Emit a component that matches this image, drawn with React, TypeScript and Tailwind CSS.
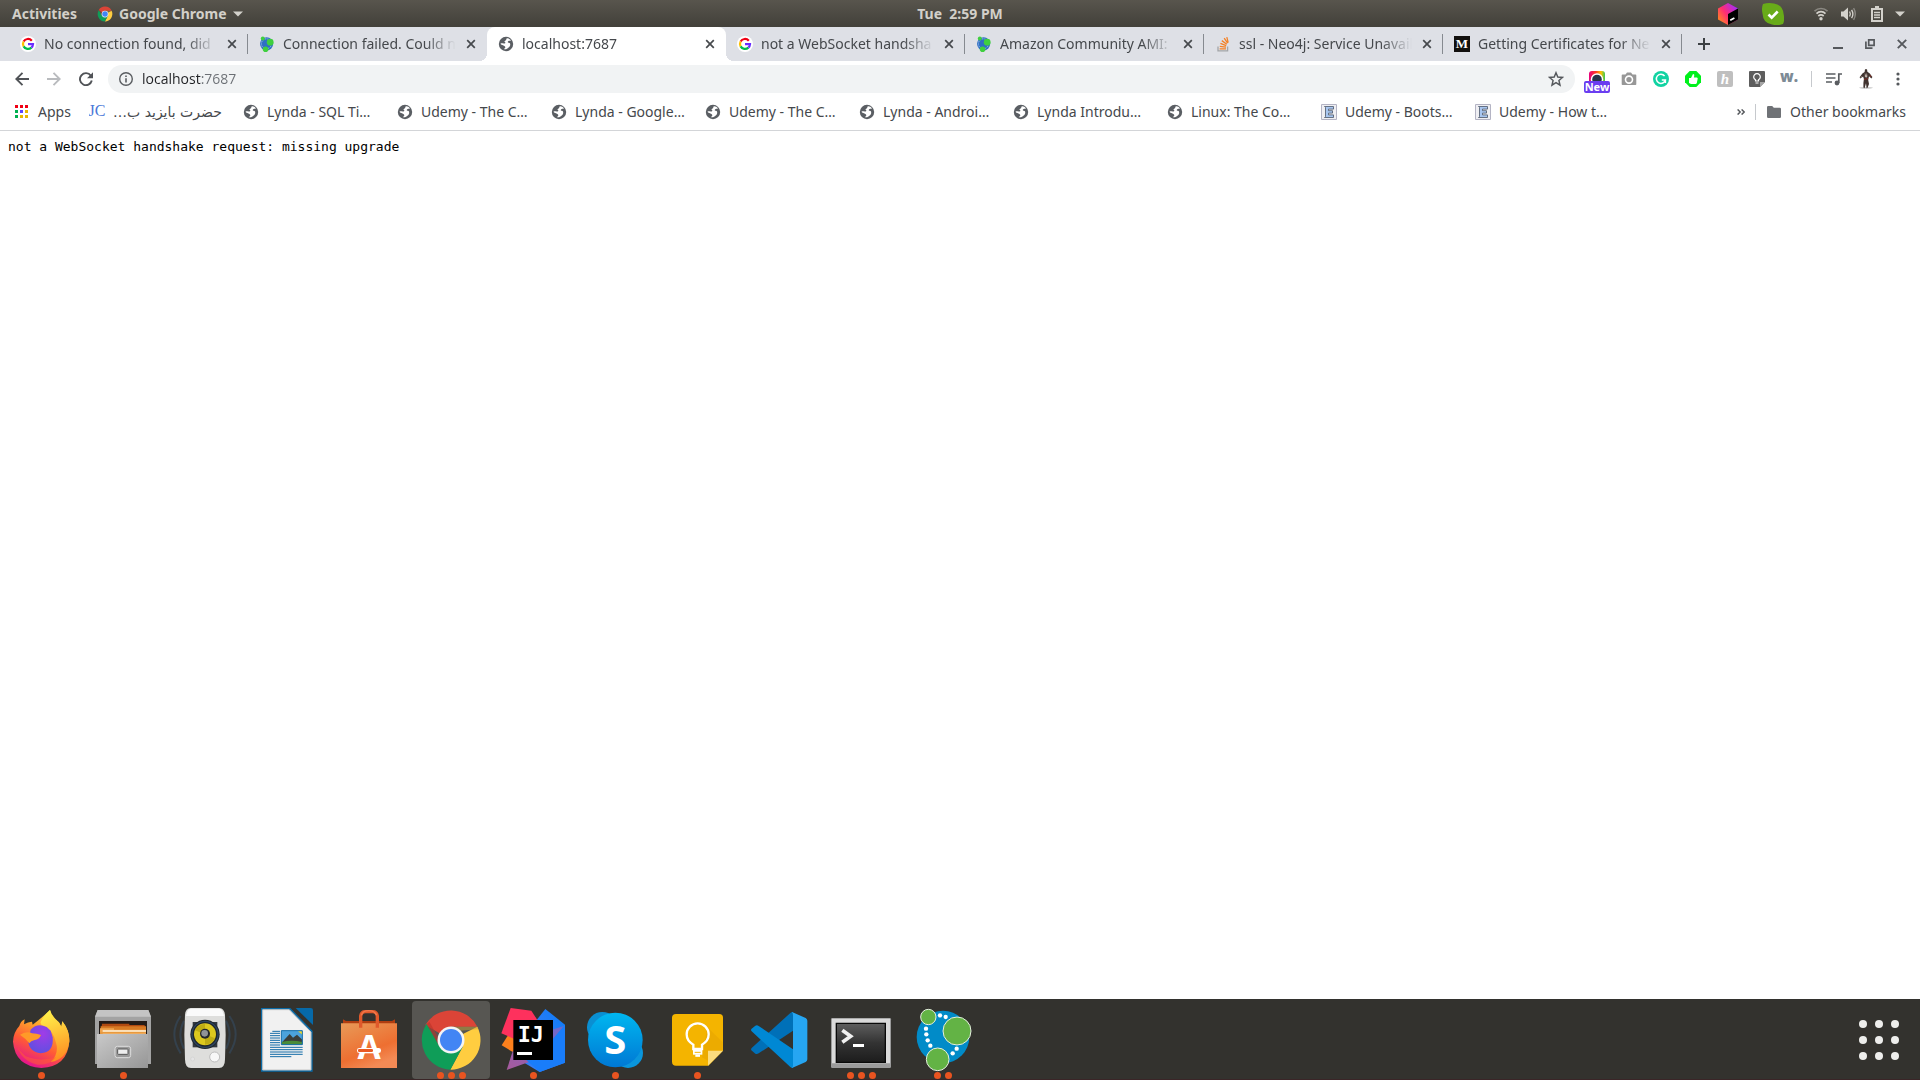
import type { ReactNode } from "react";


function GoogleIcon() {
    return (
        <svg viewBox="0 0 16 16" className="size-4 shrink-0">
            <circle cx="8" cy="8" r="8" fill="#fff" />
            <g fill="none" strokeWidth="2.2">
                <path d="M3.6 5.6A5 5 0 0 1 11.8 4.7" stroke="#f00014" />
                <path d="M3.6 10.4A5 5 0 0 1 3.6 5.6" stroke="#ffc000" />
                <path d="M11.4 11.6A5 5 0 0 1 3.6 10.4" stroke="#00bd4c" />
                <path d="M8 8.2h5A5 5 0 0 1 11.4 11.6" stroke="#6a2cff" />
            </g>
        </svg>
    );
}

function Neo4jIcon() {
    return (
        <svg viewBox="0 0 16 16" className="size-4 shrink-0">
            <circle cx="7.6" cy="7.8" r="6.6" fill="#2f6fc4" />
            <circle cx="7.4" cy="7.8" r="5" fill="none" stroke="#a9c6ea" strokeWidth=".9" strokeDasharray="1.4 1" />
            <circle cx="3.8" cy="2.6" r="2" fill="#3fcf3f" />
            <circle cx="11.2" cy="6.2" r="3.4" fill="#3fcf3f" />
            <circle cx="6.6" cy="13.2" r="2.8" fill="#3fcf3f" />
        </svg>
    );
}

function GlobeIcon() {
    return (
        <svg viewBox="0 0 16 16" className="size-4 shrink-0">
            <circle cx="8" cy="8" r="7.2" fill="#5a5e63" />
            <path d="M8.6 2.4 C10 2.1 12 2.9 13 4.6 C11.8 5 10.8 4.6 10 5.4 C9.4 6 10 6.8 10.8 6.8 C12.2 6.9 12.4 8.2 12.1 9.4 C11.6 11.2 10 12 9 12.8 C7.6 13.6 6.2 13.4 5.8 12.9 C7.2 12.4 7.6 11.4 7 10.4 C6.4 9.4 4.8 9.2 3 8.4 L2.6 7.4 C3.8 7.2 5.6 7.6 6.6 7.4 C7.8 7.2 7.4 5.8 6.2 5.6 C6.8 4.6 8.6 4.2 8.6 2.4Z" fill="#fff" />
        </svg>
    );
}

function StackIcon() {
    return (
        <svg viewBox="0 0 16 16" className="size-4 shrink-0" fill="none">
            <path d="M3 10.5v4.4h9.6v-4.4" stroke="#a3a5a8" strokeWidth="1.3" />
            <path d="M4.6 12.8h6.4M4.8 10.3l6.2.8M5.4 7.4l5.8 2.2M6.8 4.6l5 3.6M9.2 2.2l3.4 5M11.8 1.2l1.4 5.4" stroke="#f48024" strokeWidth="1.3" />
        </svg>
    );
}

function MediumIcon() {
    return (
        <svg viewBox="0 0 16 16" className="size-4 shrink-0">
            <path d="M0 0h16v16H0z" fill="#12100e" />
            <text x="8" y="12.4" textAnchor="middle" fontFamily="Liberation Serif, serif" fontWeight="700" fontSize="13" fill="#fff">M</text>
        </svg>
    );
}

function JcIcon() {
    return (
        <svg viewBox="0 0 16 16" className="size-4 shrink-0 overflow-visible">
            <text x="8" y="11.6" textAnchor="middle" fontFamily="Liberation Serif, serif" fontSize="16" fill="#4a78d8">JC</text>
        </svg>
    );
}

function EclipseIcon() {
    return (
        <svg viewBox="0 0 16 16" className="size-4 shrink-0">
            <path d="M.5.5h15v15H.5z" fill="#efeff3" stroke="#b4b4c4" />
            <path d="M3.5 2.5h9v2.6h-5v1.6h4v2.4h-4v1.8h5v2.6h-9l1-1V3.500z" fill="#a8c6f0" stroke="#4a5668" strokeWidth=".8" />
        </svg>
    );
}

function ChromeIcon({ className }: { className: string }) {
    return (
        <svg viewBox="537 54 192 192" className={className}>
            <path d="M633 150L556 105A89 89 0 0 1 712 110H633z" fill="#db4437" />
            <path d="M633 150L712 110A89 89 0 0 1 631 239L668 170z" fill="#ffcd40" />
            <path d="M633 150L668 170L631 239A89 89 0 0 1 560 101L598 168z" fill="#0f9d58" />
            <path d="M633 110h79l3 8l-55 4z" fill="#c5a23a" opacity=".5" />
            <path d="M560 103l8-8l34 60l-5 12z" fill="#b93428" opacity=".6" />
            <circle cx="633" cy="150" r="40.5" fill="#f4f4f4" />
            <circle cx="633" cy="150" r="33" fill="#4285f4" />
        </svg>
    );
}

function CloseIcon() {
    return (
        <svg viewBox="0 0 10 10" className="size-[10px]" stroke="#46494d" strokeWidth="1.7">
            <path d="M1.2 1.2l7.6 7.6M8.8 1.2L1.2 8.8" />
        </svg>
    );
}

function Caret() {
    return (
        <svg viewBox="0 0 10 6" className="h-[6px] w-[10px]" fill="#d3d1cb">
            <path d="M0 .5h10L5 5.5z" />
        </svg>
    );
}


function TopBar() {
    return (
        <header className="grid h-[27px] grid-cols-3 items-center bg-gradient-to-b from-[#58554d] to-[#42403a] px-3 text-sm font-bold text-[#d3d0c9]">
            <div className="flex items-center">
                <button>Activities</button>
                <button className="ml-5 flex items-center gap-[6px]">
                    <ChromeIcon className="size-4" />
                    Google Chrome
                    <Caret />
                </button>
            </div>
            <button className="justify-self-center whitespace-pre">Tue  2:59 PM</button>
            <div className="flex items-center justify-self-end pr-[3px]">
                <svg viewBox="0 0 20 22" className="mr-6 h-[22px] w-5">
                    <defs>
                        <linearGradient id="toolbox" x1="0" y1=".8" x2=".9" y2=".1">
                            <stop offset="0" stopColor="#ff8a1e" />
                            <stop offset=".45" stopColor="#ff2d74" />
                            <stop offset="1" stopColor="#a02cff" />
                        </linearGradient>
                    </defs>
                    <path d="M10 0L20 5.5v11L10 22L0 16.500V5.500z" fill="url(#toolbox)" />
                    <path d="M10 11l10-5.500v11L10 22z" fill="#000" />
                    <path d="M12.200 17.200l4.200-2.300" stroke="#fff" strokeWidth="1.700" />
                </svg>
                <svg viewBox="0 0 22 22" className="mr-[30px] size-[22px]">
                    <path d="M1 1Q6-.6 12 .4Q21 2 21.600 11Q23 17 21 21Q16 23 10 21.600Q1 20 .6 11Q-.8 5 1 1z" fill="#68ab19" />
                    <path d="M6.500 11.500l3.200 3.200l6-6.200" fill="none" stroke="#fff" strokeWidth="2.600" />
                </svg>
                <svg viewBox="0 0 14 14" className="mr-[13px] size-[14px]" fill="none" stroke="#d3d1cb" strokeWidth="1.700">
                    <path d="M.5 4.200A9.200 9.200 0 0 1 13.500 4.200" opacity=".45" />
                    <path d="M2.500 6.600A6.300 6.300 0 0 1 11.500 6.600M4.300 9A4 4 0 0 1 9.700 9" />
                    <circle cx="7" cy="11.800" r="1.700" fill="#d3d1cb" stroke="none" />
                </svg>
                <svg viewBox="0 0 15 14" className="mr-[15px] h-[14px] w-[15px]" fill="none" stroke="#d3d1cb" strokeWidth="1.400">
                    <path d="M0 4.500h2.500L7 .5v13L2.500 9.500H0z" fill="#d3d1cb" stroke="none" />
                    <path d="M8.600 4.500q1.500 2.500 0 5M10.600 2.800q2.600 4.200 0 8.400" />
                    <path d="M12.600 1.200q3.400 5.800 0 11.600" opacity=".45" />
                </svg>
                <svg viewBox="0 0 12 16" className="mr-3 h-4 w-3" fill="none" stroke="#d3d1cb">
                    <path d="M1 3h10v12H1z" strokeWidth="2" />
                    <path d="M4 0h4v2H4z" fill="#d3d1cb" stroke="none" />
                    <path d="M3 6.500h6M3 9h6M3 11.500h6" strokeWidth="1.500" />
                </svg>
                <Caret />
            </div>
        </header>
    );
}


const tabs = [
    { title: "No connection found, did", icon: <GoogleIcon />, divider: true },
    { title: "Connection failed. Could n", icon: <Neo4jIcon /> },
    { title: "localhost:7687", icon: <GlobeIcon />, active: true },
    { title: "not a WebSocket handsha", icon: <GoogleIcon />, divider: true },
    { title: "Amazon Community AMI:", icon: <Neo4jIcon />, divider: true },
    { title: "ssl - Neo4j: Service Unavail", icon: <StackIcon />, divider: true },
    { title: "Getting Certificates for Ne", icon: <MediumIcon />, divider: true },
];

function TabStrip() {
    return (
        <nav className="flex h-[34px] items-center bg-[#dee0e6] pr-[13px] pl-[9px]">
            {tabs.map((tab) => (
                <div
                    key={tab.title}
                    className={
                        tab.active
                            ? "relative flex h-full w-[239px] min-w-0 items-center rounded-t-lg bg-white pr-[11px] pl-[11px] before:absolute before:bottom-0 before:-left-2 before:size-2 before:bg-[radial-gradient(circle_at_0_0,transparent_8px,white_8px)] after:absolute after:-right-2 after:bottom-0 after:size-2 after:bg-[radial-gradient(circle_at_100%_0,transparent_8px,white_8px)]"
                            : "relative flex h-full w-[239px] min-w-0 items-center pr-[11px] pl-[11px]"
                    }
                >
                    {tab.icon}
                    <a href="#" className="ml-2 min-w-0 flex-1 overflow-hidden whitespace-nowrap text-[#45484c] [mask-image:linear-gradient(to_right,black_82%,transparent)]">
                        {tab.title}
                    </a>
                    <button aria-label="Close tab" className="ml-[10px]">
                        <CloseIcon />
                    </button>
                    {tab.divider && <span className="absolute right-0 h-5 w-px bg-[#868a90]" />}
                </div>
            ))}
            <button aria-label="New tab" className="ml-4">
                <svg viewBox="0 0 12 12" className="size-3" stroke="#3c4043" strokeWidth="2">
                    <path d="M6 0v12M0 6h12" />
                </svg>
            </button>
            <div className="ml-auto flex items-center gap-[22px]">
                <button aria-label="Minimize">
                    <svg viewBox="0 0 10 10" className="size-[10px]" fill="#55585c"><path d="M0 8h10v2H0z" /></svg>
                </button>
                <button aria-label="Restore">
                    <svg viewBox="0 0 10 10" className="size-[10px]" fill="none" stroke="#55585c" strokeWidth="1.700">
                        <path d="M3.700.9h5.400v5.400H3.700zM.9 2.500v6.600h6.600" />
                    </svg>
                </button>
                <button aria-label="Close window">
                    <svg viewBox="0 0 10 10" className="size-[10px]" stroke="#55585c" strokeWidth="1.900"><path d="M.8.8l8.400 8.400M9.200.8L.8 9.200" /></svg>
                </button>
            </div>
        </nav>
    );
}


function ExtensionButton({ label, children }: { label: string; children: ReactNode }) {
    return (
        <button aria-label={label} className="relative flex size-8 items-center justify-center">
            {children}
        </button>
    );
}

function Toolbar() {
    return (
        <div className="flex h-9 items-center bg-white pr-[6px]">
            <div className="flex items-center gap-[18px] pl-[15px]">
                <button aria-label="Back">
                    <svg viewBox="0 0 14 14" className="size-[14px]" fill="none" stroke="#505357" strokeWidth="1.900"><path d="M14 7H1.500M7.500.8L1.300 7l6.200 6.200" /></svg>
                </button>
                <button aria-label="Forward">
                    <svg viewBox="0 0 14 14" className="size-[14px]" fill="none" stroke="#b9bbbe" strokeWidth="1.900"><path d="M0 7h12.500M6.500.8L12.700 7l-6.200 6.200" /></svg>
                </button>
                <button aria-label="Reload">
                    <svg viewBox="0 0 14 14" className="size-[14px]" fill="none" stroke="#505357" strokeWidth="1.900">
                        <path d="M11.800 3.600A6 6 0 1 0 12.800 8.600" />
                        <path d="M14 .2v6H8z" fill="#505357" stroke="none" />
                    </svg>
                </button>
            </div>
            <div className="ml-[15px] flex h-7 flex-1 items-center rounded-full bg-[#f1f3f4] px-[11px]">
                <svg viewBox="0 0 14 14" className="size-[14px] shrink-0" fill="none" stroke="#5a5d61" strokeWidth="1.400">
                    <circle cx="7" cy="7" r="6.300" />
                    <path d="M7 6.200v4.300M7 3.400v1.700" strokeWidth="1.600" />
                </svg>
                <input
                    aria-label="Address"
                    defaultValue="localhost:7687"
                    className="ml-[9px] min-w-0 flex-1 bg-[linear-gradient(to_right,#202124_59px,#6b6f74_59px)] bg-clip-text font-['Open_Sans',sans-serif] text-transparent outline-none"
                />
                <button aria-label="Bookmark this page">
                    <svg viewBox="0 0 24 24" className="size-[16px]" fill="none" stroke="#55585c" strokeWidth="2.200">
                        <path d="M12 2.600l2.700 6.500 7 .6-5.300 4.600 1.600 6.900-6-3.700-6 3.700 1.600-6.900-5.300-4.600 7-.6z" />
                    </svg>
                </button>
            </div>
            <div className="ml-[6px] flex items-center">
                <ExtensionButton label="Screen capture">
                    <svg viewBox="0 0 16 16" className="size-4">
                        <defs>
                            <linearGradient id="capture">
                                <stop offset="0" stopColor="#e6007e" />
                                <stop offset=".45" stopColor="#ff3b1f" />
                                <stop offset=".75" stopColor="#ffc400" />
                                <stop offset="1" stopColor="#35c759" />
                            </linearGradient>
                        </defs>
                        <rect width="16" height="16" rx="3" fill="url(#capture)" />
                        <circle cx="8" cy="8.500" r="6.200" fill="#fff" />
                        <circle cx="8" cy="8.500" r="4.800" fill="#26344a" />
                    </svg>
                    <span className="absolute inset-x-[3px] bottom-[2px] rounded-[2px] bg-[#6a3df0] text-center text-[11px] leading-3 font-bold text-white">New</span>
                </ExtensionButton>
                <ExtensionButton label="Screenshot">
                    <svg viewBox="0 0 16 16" className="size-4" fill="#979797">
                        <path d="M1.500 3.500H4.500L6 1.500h4l1.500 2h3q.8 0 .8.800v9q0 .8-.8.800h-13q-.8 0-.8-.8v-9q0-.8.800-.8z" />
                        <circle cx="8" cy="8.600" r="3.500" fill="none" stroke="#fff" strokeWidth="1.600" />
                    </svg>
                </ExtensionButton>
                <ExtensionButton label="Grammar">
                    <svg viewBox="0 0 16 16" className="size-4">
                        <circle cx="8" cy="8" r="8" fill="#11d3a2" />
                        <path d="M11.600 5A4.600 4.600 0 1 0 12.400 9H8.800M12.400 9v3" fill="none" stroke="#fff" strokeWidth="1.500" />
                    </svg>
                </ExtensionButton>
                <ExtensionButton label="Like">
                    <svg viewBox="0 0 16 16" className="size-4">
                        <path d="M4.700 0h6.600L16 4.700v6.600L11.300 16H4.700L0 11.300V4.700z" fill="#00f01c" />
                        <path d="M4 7h2l2-4q1.800 0 1.200 2L8.900 6.400h3q1 .3.800 1.400L11.800 12q-.4.900-1.200.9H6L4 12z" fill="#fff" />
                    </svg>
                </ExtensionButton>
                <ExtensionButton label="Coupons">
                    <svg viewBox="0 0 16 16" className="size-4">
                        <rect width="16" height="16" rx="2" fill="#bfbfbf" />
                        <text x="8" y="13" textAnchor="middle" fontFamily="Liberation Serif, serif" fontStyle="italic" fontWeight="700" fontSize="15" fill="#fff">h</text>
                    </svg>
                </ExtensionButton>
                <ExtensionButton label="Notes">
                    <svg viewBox="0 0 16 16" className="size-4" fill="none" stroke="#fff" strokeWidth="1.200">
                        <path d="M1 0h14q1 0 1 1v10l-5 5H1q-1 0-1-1V1q0-1 1-1z" fill="#5d5d5d" stroke="none" />
                        <path d="M16 11h-5v5z" fill="#a5a5a5" stroke="none" />
                        <path d="M6.500 10V8.800A3.300 3.300 0 1 1 9.500 8.800V10zM6.500 12h3" />
                    </svg>
                </ExtensionButton>
                <ExtensionButton label="Wiki">
                    <svg viewBox="0 0 16 16" className="size-4 overflow-visible">
                        <text x="8" y="11" textAnchor="middle" fontFamily="Open Sans, sans-serif" fontWeight="800" fontSize="15" fill="#7d8b96">w.</text>
                    </svg>
                </ExtensionButton>
            </div>
            <span className="ml-[6px] h-4 w-px bg-[#c6c9cd]" />
            <div className="ml-[6px] flex items-center">
                <ExtensionButton label="Media controls">
                    <svg viewBox="0 0 16 14" className="h-[14px] w-4" fill="none" stroke="#5a5d61" strokeWidth="1.700">
                        <path d="M0 2h9.500M0 6h9.500M0 10h6M12.800 11V2H16" />
                        <circle cx="11" cy="11" r="2.400" fill="#5a5d61" stroke="none" />
                    </svg>
                </ExtensionButton>
                <ExtensionButton label="Profile">
                    <svg viewBox="0 0 20 20" className="size-5">
                        <ellipse cx="10" cy="18.800" rx="7" ry=".9" fill="#c9c9c9" />
                        <path d="M9 .2l2 0 .4 2.600 2.400 1.600 2.600 3.600-1 1.600-2.400-2.400L12.200 11l.8 4-1.400 3.800-1 .4-.6-5-1.400 5-1.200-.6L7.400 14l.5-4-.8-2.400L4.400 9.600l-.8-1.400L6.400 4.600 8.600 3z" fill="#40332f" />
                        <path d="M8.900 3.800l1.200 3 .8-3 .5 3.600-1.300 1.400-1.300-1.200zM4.200 8.200l1.400-1 .4 1z" fill="#c4b6ae" />
                        <path d="M8 10.500l4-1M14 6l1 2" stroke="#8e2b23" strokeWidth=".8" />
                    </svg>
                </ExtensionButton>
                <ExtensionButton label="Menu">
                    <svg viewBox="0 0 4 14" className="h-[14px] w-1" fill="#55585c">
                        <circle cx="2" cy="2" r="1.600" />
                        <circle cx="2" cy="7" r="1.600" />
                        <circle cx="2" cy="12" r="1.600" />
                    </svg>
                </ExtensionButton>
            </div>
        </div>
    );
}


const bookmarks = [
    { title: "حضرت بایزید ب…", icon: <JcIcon />, rtl: true },
    { title: "Lynda - SQL Ti…", icon: <GlobeIcon /> },
    { title: "Udemy - The C…", icon: <GlobeIcon /> },
    { title: "Lynda - Google…", icon: <GlobeIcon /> },
    { title: "Udemy - The C…", icon: <GlobeIcon /> },
    { title: "Lynda - Androi…", icon: <GlobeIcon /> },
    { title: "Lynda Introdu…", icon: <GlobeIcon /> },
    { title: "Linux: The Co…", icon: <GlobeIcon /> },
    { title: "Udemy - Boots…", icon: <EclipseIcon /> },
    { title: "Udemy - How t…", icon: <EclipseIcon /> },
];

const appColors = ["#f00014", "#f00014", "#f00014", "#00b050", "#5b45ff", "#e8b800", "#00b050", "#e8b800", "#e8b800"];

function BookmarksBar() {
    return (
        <div className="flex h-[34px] items-center border-b border-[#d3d5d8] bg-white pr-[14px] pb-1 pl-[15px] whitespace-nowrap text-[#45484c]">
            <a href="#" className="flex w-[74px] shrink-0 items-center gap-[10px]">
                <span className="grid grid-cols-3 gap-[2px]">
                    {appColors.map((color, i) => (
                        <span key={i} className="size-[3px]" style={{ backgroundColor: color }} />
                    ))}
                </span>
                Apps
            </a>
            {bookmarks.map((item, i) => (
                <a key={i} href="#" className="flex w-[154px] min-w-0 items-center gap-2 overflow-hidden">
                    {item.icon}
                    <span dir={item.rtl ? "rtl" : "ltr"} className={item.rtl ? "font-['DejaVu_Sans',sans-serif]" : ""}>{item.title}</span>
                </a>
            ))}
            <div className="ml-auto flex items-center">
                <button aria-label="More bookmarks">
                    <svg viewBox="0 0 8 6" className="h-[6px] w-2" fill="none" stroke="#55585c" strokeWidth="1.400"><path d="M.6.4L3.200 3L.6 5.600M4.600.4L7.200 3L4.600 5.600" /></svg>
                </button>
                <span className="ml-[10px] h-4 w-px bg-[#c6c9cd]" />
                <a href="#" className="ml-[11px] flex items-center gap-[9px]">
                    <svg viewBox="0 0 14 12" className="h-3 w-[14px]" fill="#6f7276"><path d="M1.200 0h4l1.600 1.700h6Q14 1.700 14 2.900v8Q14 12 12.800 12H1.200Q0 12 0 10.800V1.200Q0 0 1.200 0z" /></svg>
                    Other bookmarks
                </a>
            </div>
        </div>
    );
}


function FirefoxDockIcon() {
    return (
        <svg viewBox="27 54 192 192" className="size-16">
            <defs>
                <linearGradient id="fox" x1=".8" y1="0" x2=".35" y2="1">
                    <stop offset="0" stopColor="#fff44f" />
                    <stop offset=".35" stopColor="#ffa42a" />
                    <stop offset=".65" stopColor="#ff5a36" />
                    <stop offset="1" stopColor="#e3128f" />
                </linearGradient>
                <linearGradient id="foxTail" x1=".4" y1="0" x2=".6" y2="1">
                    <stop offset="0" stopColor="#fff14a" />
                    <stop offset="1" stopColor="#ff8a20" />
                </linearGradient>
                <radialGradient id="foxGlobe" cx=".6" cy=".3" r=".8">
                    <stop offset="0" stopColor="#a03ce8" />
                    <stop offset="1" stopColor="#5a51e0" />
                </radialGradient>
            </defs>
            <path d="M74 88L72 103Q84 96 96 95L98 104Q125 84 150 60Q155 78 176 96L184 110L187 94Q208 120 208 153Q203 230 124 234Q45 228 39 155Q40 127 58 108Q61 95 74 88z" fill="url(#fox)" />
            <path d="M150 60Q152 80 178 98L184 110L187 94Q210 124 208 155Q200 208 152 216Q178 190 168 158Q160 122 134 110Q120 104 122 96Q130 78 150 60z" fill="url(#foxTail)" />
            <path d="M92 119Q112 98 140 111L152 122L158 142Q162 188 122 190Q84 184 85 150z" fill="url(#foxGlobe)" />
            <path d="M60 134Q82 122 96 130Q110 130 123 135Q118 148 104 150Q92 152 88 160Q78 146 60 134z" fill="#ff9a28" />
            <path d="M44 130Q40 170 76 198Q118 216 168 202Q150 226 112 224Q50 212 44 130z" fill="#ff5b36" opacity=".55" />
        </svg>
    );
}

function FilesDockIcon() {
    return (
        <svg viewBox="273 54 192 192" className="size-16">
            <defs>
                <linearGradient id="cabinet" x1="0" y1="0" x2="1" y2="1">
                    <stop offset="0" stopColor="#c9c9c9" />
                    <stop offset="1" stopColor="#969696" />
                </linearGradient>
            </defs>
            <path d="M293 60h152l8 20v142H285V80z" fill="#a3a3a3" />
            <path d="M293 60h152l8 20H285z" fill="#c4c4c4" />
            <path d="M297 93h144v44H297z" fill="#241c18" />
            <path d="M306 101h82v4h46v26H302z" fill="#b14a10" />
            <path d="M302 109h136v22H302z" fill="#d77a24" />
            <path d="M300 115h42v4h96v12H300z" fill="#f0a44e" />
            <path d="M308 121h130v10H308z" fill="#fff3dd" />
            <path d="M300 125h138v6H300z" fill="#e89a3f" />
            <path d="M291 132h153v102H291z" fill="url(#cabinet)" />
            <rect x="345" y="169" width="47" height="34" rx="7" fill="#9a9a9a" stroke="#dedede" strokeWidth="3" />
            <rect x="353" y="177" width="31" height="16" rx="2" fill="#eee" stroke="#555" strokeWidth="3" />
        </svg>
    );
}

function MusicDockIcon() {
    return (
        <svg viewBox="519 54 192 192" className="size-16">
            <g fill="none" stroke="#34475a" strokeWidth="6" opacity=".7">
                <path d="M542 78q-38 54 0 112M688 78q38 54 0 112M552 92q-22 42 0 84M678 92q22 42 0 84" />
            </g>
            <path d="M572 54h86q14 0 17 20l2 60-2 74q0 26-18 26h-84q-18 0-18-26l-2-74 2-60q2-20 17-20z" fill="#dededc" />
            <path d="M572 56h86q10 0 14 22H558q4-22 14-22z" fill="#fafafa" />
            <path d="M578 96h74v76h-74z" fill="#343a40" />
            <circle cx="615" cy="133" r="44" fill="#20262c" />
            <circle cx="615" cy="133" r="39" fill="none" stroke="#2c4560" strokeWidth="4" />
            <circle cx="615" cy="133" r="33" fill="#dcc81e" />
            <path d="M615 133l-30-12q8-18 30-19zM615 133l30 12q-8 18-30 19z" fill="#9a8a08" opacity=".45" />
            <circle cx="615" cy="131" r="15" fill="#24282c" />
            <circle cx="614" cy="130" r="10" fill="#909498" />
            <circle cx="644" cy="201" r="15" fill="#f7f7f7" stroke="#bdbdbd" strokeWidth="3" />
            <circle cx="578" cy="207" r="6" fill="#e4e4e4" stroke="#d0d0d0" strokeWidth="2" />
        </svg>
    );
}

function WriterDockIcon() {
    return (
        <svg viewBox="45 54 192 192" className="size-16">
            <path d="M63 54h88l67 69v122H63z" fill="#0a6aa6" />
            <path d="M167 54h45q7 0 7 7v44z" fill="#0669a8" />
            <path d="M68 59h80l65 67v114H68z" fill="#f1f1f1" stroke="#c4c4c4" strokeWidth="3" />
            <g stroke="#156da8" strokeWidth="3">
                <path d="M97 124h23M90 130h30M90 137h30M90 144h30M90 151h30M90 158h30M90 165h30M90 172h98M90 179h98M90 186h98M90 193h98M90 200h64" />
            </g>
            <path d="M124 122h63v42h-63z" fill="#4ca3dc" />
            <path d="M125 158l8-9 16-17 10 11 12-9 16 15v12h-62z" fill="#3b3f3b" />
            <path d="M125 156q30-7 62 0v8h-62z" fill="#498b39" />
            <path d="M174 124h13v10z" fill="#f6dc28" />
            <path d="M124 122h63v42h-63z" fill="none" stroke="#146da8" strokeWidth="3" />
        </svg>
    );
}

function SoftwareDockIcon() {
    return (
        <svg viewBox="291 54 192 192" className="size-16">
            <defs>
                <linearGradient id="bag" x1="0" y1="0" x2=".5" y2="1">
                    <stop offset="0" stopColor="#e89a58" />
                    <stop offset=".7" stopColor="#ee6f31" />
                    <stop offset="1" stopColor="#f38a55" />
                </linearGradient>
            </defs>
            <path d="M309 88l9 5h138l9-5v18H309z" fill="#b03d10" />
            <path d="M303 100h168v134H303z" fill="url(#bag)" />
            <path d="M362 113V78q2-13 14-13h22q12 0 14 13v35" fill="none" stroke="#e0592b" strokeWidth="10" />
            <path d="M364 76q4-14 22-14t24 14" fill="none" stroke="#f07a4c" strokeWidth="4" />
            <text x="387" y="207" textAnchor="middle" fontFamily="Open Sans, sans-serif" fontWeight="700" fontSize="101" fill="#fff">A</text>
            <rect x="351" y="174" width="72" height="15" rx="7" fill="#fff" />
            <rect x="354" y="177" width="45" height="9" rx="4" fill="#ea5b22" />
        </svg>
    );
}

function IntellijDockIcon() {
    return (
        <svg viewBox="63 54 192 192" className="size-16">
            <defs>
                <linearGradient id="ideaBlue" x1="1" y1="0" x2="0" y2="1">
                    <stop offset="0" stopColor="#087cfa" />
                    <stop offset=".6" stopColor="#3a7cf0" />
                    <stop offset="1" stopColor="#2b7df8" />
                </linearGradient>
                <linearGradient id="ideaViolet" x1="0" y1="1" x2="1" y2="0">
                    <stop offset="0" stopColor="#a85a9c" />
                    <stop offset="1" stopColor="#6a6ad0" />
                </linearGradient>
            </defs>
            <path d="M65 166l20-32 30 20v42z" fill="#fc801d" />
            <path d="M92 54l62 8 36 56-84 30-42-18z" fill="#fe315d" />
            <path d="M170 90l26-33 59 47v114l-76 28-64-38z" fill="url(#ideaBlue)" />
            <path d="M98 184l-18 56 90-32 82-100-70 22z" fill="url(#ideaViolet)" />
            <path d="M218 148l37-44v114l-76 28-40-36h79z" fill="#197dfa" />
            <path d="M100 90h119v120H100z" fill="#000" />
            <text x="113" y="157" fontFamily="DejaVu Sans Mono, monospace" fontWeight="700" fontSize="65" fill="#fff">IJ</text>
            <path d="M111 186h45v9h-45z" fill="#fff" />
        </svg>
    );
}

function SkypeDockIcon() {
    return (
        <svg viewBox="309 54 192 192" className="size-16">
            <defs>
                <linearGradient id="skype" x1="0" y1="0" x2="0" y2="1">
                    <stop offset="0" stopColor="#00b7f0" />
                    <stop offset="1" stopColor="#0078d4" />
                </linearGradient>
            </defs>
            <circle cx="367" cy="112" r="46" fill="#0a8fd2" />
            <circle cx="444" cy="189" r="45" fill="#0a96dc" />
            <circle cx="406" cy="150" r="82" fill="url(#skype)" />
            <text x="406" y="193" textAnchor="middle" fontFamily="Open Sans, sans-serif" fontWeight="700" fontSize="120" fill="#fff">S</text>
        </svg>
    );
}

function KeepDockIcon() {
    return (
        <svg viewBox="555 54 192 192" className="size-16">
            <path d="M588 72h130q11 0 11 11v99l-44 45h-97q-12 0-12-12V84q0-12 12-12z" fill="#f4b400" />
            <path d="M682 112l46 45v25h-44v30l-18-10z" fill="#e8a700" opacity=".7" />
            <path d="M729 182h-45v45z" fill="#fbdc7e" />
            <path d="M640 177v-13q-20-11-20-31a33 33 0 0 1 66 0q0 20-20 31v13z" fill="none" stroke="#fff" strokeWidth="7" />
            <path d="M639 179h28v15h-28z" fill="#fff" />
            <path d="M646 197h14" stroke="#fff" strokeWidth="7" />
            <path d="M644 187h18" stroke="#f4b400" strokeWidth="3" />
        </svg>
    );
}

function CodeDockIcon() {
    return (
        <svg viewBox="81 54 192 192" className="size-16">
            <path d="M219 66v56L116 190q-5 4-10 1l-12-10q-2-4 1-7L211 69q3-3 8-3z" fill="#0070b8" />
            <path d="M219 234v-56L116 108q-5-4-10-1l-12 10q-2 4 1 7L211 231q3 3 8 3z" fill="#0088d4" />
            <path d="M216 66l41 18q5 3 5 8v116q0 5-5 8l-41 18q3-3 3-9V76q0-6-3-10z" fill="#26a6f2" />
        </svg>
    );
}

function TerminalDockIcon() {
    return (
        <svg viewBox="327 54 192 192" className="size-16">
            <defs>
                <linearGradient id="screen" x1="0" y1="0" x2="0" y2="1">
                    <stop offset="0" stopColor="#5d5d5d" />
                    <stop offset=".5" stopColor="#333" />
                    <stop offset="1" stopColor="#1d1d1d" />
                </linearGradient>
            </defs>
            <rect x="333" y="84" width="180" height="150" rx="4" fill="#9b9b9b" />
            <path d="M336 86h174v134H336z" fill="#dadada" />
            <path d="M347 98h151v121H347z" fill="#090909" />
            <path d="M351 102h143v113H351z" fill="url(#screen)" />
            <path d="M367 121l25 18-25 18" fill="none" stroke="#f1f1f1" strokeWidth="11" />
            <path d="M399 162h33v9h-33z" fill="#fff" />
        </svg>
    );
}

function Neo4jDockIcon() {
    return (
        <svg viewBox="573 54 192 192" className="size-16">
            <circle cx="669" cy="141" r="79" fill="#018bc8" />
            <g fill="#fff">
                <circle cx="660" cy="76" r="6.500" />
                <circle cx="677" cy="81" r="6.500" />
                <circle cx="618" cy="116" r="6.500" />
                <circle cx="619" cy="133" r="6.500" />
                <circle cx="623" cy="151" r="6.500" />
                <circle cx="631" cy="167" r="6.500" />
                <circle cx="698" cy="190" r="6.500" />
                <circle cx="710" cy="176" r="6.500" />
            </g>
            <g fill="#63b345" stroke="#e5eee0" strokeWidth="3">
                <circle cx="625" cy="81" r="23" />
                <circle cx="711" cy="123" r="42" />
                <circle cx="653" cy="208" r="34" />
            </g>
        </svg>
    );
}

const dockApps = [
    { name: "Firefox", icon: <FirefoxDockIcon />, windows: 1 },
    { name: "Files", icon: <FilesDockIcon />, windows: 1 },
    { name: "Rhythmbox", icon: <MusicDockIcon />, windows: 0 },
    { name: "LibreOffice Writer", icon: <WriterDockIcon />, windows: 0 },
    { name: "Ubuntu Software", icon: <SoftwareDockIcon />, windows: 0 },
    { name: "Google Chrome", icon: <ChromeIcon className="size-16" />, windows: 3, focused: true },
    { name: "IntelliJ IDEA", icon: <IntellijDockIcon />, windows: 1 },
    { name: "Skype", icon: <SkypeDockIcon />, windows: 1 },
    { name: "Keep", icon: <KeepDockIcon />, windows: 1 },
    { name: "Visual Studio Code", icon: <CodeDockIcon />, windows: 0 },
    { name: "Terminal", icon: <TerminalDockIcon />, windows: 3 },
    { name: "Neo4j Desktop", icon: <Neo4jDockIcon />, windows: 2 },
];

function Dock() {
    return (
        <footer className="flex h-[81px] items-center border-b border-[#3a2527] bg-[#33322e] pt-[2px] pr-[21px]">
            {dockApps.map((app) => (
                <button
                    key={app.name}
                    aria-label={app.name}
                    className={
                        app.focused
                            ? "mx-[2px] flex h-[78px] w-[78px] flex-col items-center rounded-[4px] bg-[#575652] pt-[7px]"
                            : "mx-[2px] flex h-[78px] w-[78px] flex-col items-center pt-[7px]"
                    }
                >
                    {app.icon}
                    <span className="flex gap-[4px]">
                        {Array.from({ length: app.windows }, (_, i) => (
                            <span key={i} className="size-[7px] rounded-full bg-[#e95420]" />
                        ))}
                    </span>
                </button>
            ))}
            <button aria-label="Show applications" className="ml-auto grid grid-cols-3 gap-2">
                {Array.from({ length: 9 }, (_, i) => (
                    <span key={i} className="size-2 rounded-full bg-[#eeeeec]" />
                ))}
            </button>
        </footer>
    );
}


export default function App() {
    return (
        <div className="flex min-h-screen flex-col bg-white font-['Noto_Sans',sans-serif] text-sm">
            <TopBar />
            <TabStrip />
            <Toolbar />
            <BookmarksBar />
            <main className="flex-1 bg-white p-2">
                <pre className="font-['DejaVu_Sans_Mono',monospace] text-[13px] leading-4 text-black">not a WebSocket handshake request: missing upgrade</pre>
            </main>
            <Dock />
        </div>
    );
}
